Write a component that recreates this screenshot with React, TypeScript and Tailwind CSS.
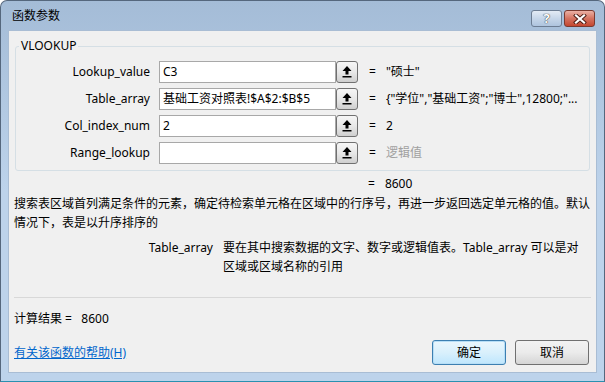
import React from 'react';

const font = { fontFamily: '"Noto Sans", "Noto Sans CJK SC", sans-serif' };

function PickButton() {
  return (
    <div className="w-[22px] h-[22px] shrink-0 rounded-[3px] border border-[#707070] bg-gradient-to-b from-[#f6f6f6] via-[#e8e8e8] to-[#cfcfcf] flex items-center justify-center">
      <svg width="10" height="12" viewBox="0 0 10 12">
        <path d="M5 0 L9.5 5 L6.5 5 L6.5 8.5 L3.5 8.5 L3.5 5 L0.5 5 Z" fill="#000" />
        <rect x="0.5" y="10" width="9" height="1.5" fill="#000" />
      </svg>
    </div>
  );
}

function ArgRow({ label, value, result, dim }: { label: string; value: string; result: string; dim?: boolean }) {
  return (
    <div className="flex items-center h-[22px]">
      <div className="w-[134px] text-right text-[12px] text-black">{label}</div>
      <div className="ml-[9px] w-[177px] h-[22px] border border-[#a8a8a8] bg-white px-[3px] flex items-center text-[12px] text-black whitespace-nowrap overflow-hidden">
        {value}
      </div>
      <PickButton />
      <div className="ml-[11px] text-[12px]">=</div>
      <div className={`ml-[10px] text-[12px] whitespace-nowrap ${dim ? 'text-[#a0a0a0]' : 'text-black'}`}>{result}</div>
    </div>
  );
}

export default function App() {
  return (
    <div className="w-[605px] h-[382px] bg-white" style={font}>
      <div className="w-full h-full flex flex-col rounded-t-[7px] border border-[#55677d] border-b-[#2a90b0] bg-gradient-to-b from-[#a4bcd7] via-[#bdd3eb] to-[#bdd3eb] px-[7px] pb-[8px]">
        {/* title bar */}
        <div className="h-[29px] flex items-center justify-between">
          <div className="pl-[4px] pt-[1px] text-[12px] text-black">函数参数</div>
          <div className="flex items-start gap-[2px] self-start mt-[9px] mr-[2px]">
            <div className="w-[31px] h-[17px] rounded-[3px] border border-[#6c7d93] bg-gradient-to-b from-[#e3ebf5] via-[#c6d6e9] to-[#aec4de] flex items-center justify-center">
              <span className="text-[13px] font-bold leading-none text-white [text-shadow:0_0_1px_#333,0_0_1px_#333]">?</span>
            </div>
            <div className="w-[31px] h-[17px] rounded-[3px] border border-[#7a3a30] bg-gradient-to-b from-[#eab0a4] via-[#d47260] to-[#c4462f] flex items-center justify-center">
              <svg width="14" height="10" viewBox="0 0 14 10">
                <path d="M3 1.5 L11 8.5 M11 1.5 L3 8.5" stroke="#4a1a12" strokeWidth="4" strokeLinecap="square" />
                <path d="M3 1.5 L11 8.5 M11 1.5 L3 8.5" stroke="#fff" strokeWidth="2.2" strokeLinecap="square" />
              </svg>
            </div>
          </div>
        </div>

        {/* client area */}
        <div className="flex-1 bg-[#f0f0f0] border border-[#a9bdd4] flex flex-col text-[12px] leading-[16px] text-black">
          {/* group box */}
          <div className="relative mt-[15px] mx-[6px] h-[125px] rounded-[3px] border border-[#d5dfe5] pt-[14px] flex flex-col gap-[5px]">
            <div className="absolute -top-[9px] left-[3px] px-[2px] bg-[#f0f0f0] text-[12px] leading-[16px]">VLOOKUP</div>
            <ArgRow label="Lookup_value" value="C3" result={'"硕士"'} />
            <ArgRow label="Table_array" value="基础工资对照表!$A$2:$B$5" result={'{"学位","基础工资";"博士",12800;"...'} />
            <ArgRow label="Col_index_num" value="2" result="2" />
            <ArgRow label="Range_lookup" value="" result="逻辑值" dim />
          </div>

          <div className="mt-[5px] pl-[359px] flex">
            <span>=</span>
            <span className="ml-[10px]">8600</span>
          </div>
          <p className="mt-[2px] pl-[5px] pr-[4px] leading-[19px]">
            搜索表区域首列满足条件的元素，确定待检索单元格在区域中的行序号，再进一步返回选定单元格的值。默认情况下，表是以升序排序的
          </p>

          <div className="mt-[6px] flex leading-[19px]">
            <div className="w-[204px] text-right">Table_array</div>
            <div className="ml-[10px] w-[360px]">要在其中搜索数据的文字、数字或逻辑值表。Table_array 可以是对区域或区域名称的引用</div>
          </div>

          <div className="mt-[21px] mx-[5px] h-px bg-[#d8d8d8]" />

          <div className="mt-[13px] pl-[5px]">计算结果 =&nbsp;&nbsp;&nbsp;8600</div>

          <div className="mt-[13px] flex items-center justify-between pl-[5px] pr-[7px]">
            <a className="text-[#0066cc] underline" href="#">有关该函数的帮助(H)</a>
            <div className="flex gap-[9px]">
              <button className="w-[74px] h-[25px] rounded-[3px] border border-[#3c7fb1] bg-gradient-to-b from-[#eaf6fd] via-[#d9f0fc] to-[#bee6fd] text-[12px] text-black shadow-[inset_0_0_0_1px_#b7def6]">
                确定
              </button>
              <button className="w-[74px] h-[25px] rounded-[3px] border border-[#707070] bg-gradient-to-b from-[#f2f2f2] via-[#ebebeb] to-[#d5d5d5] text-[12px] text-black">
                取消
              </button>
            </div>
          </div>
        </div>
      </div>
    </div>
  );
}
